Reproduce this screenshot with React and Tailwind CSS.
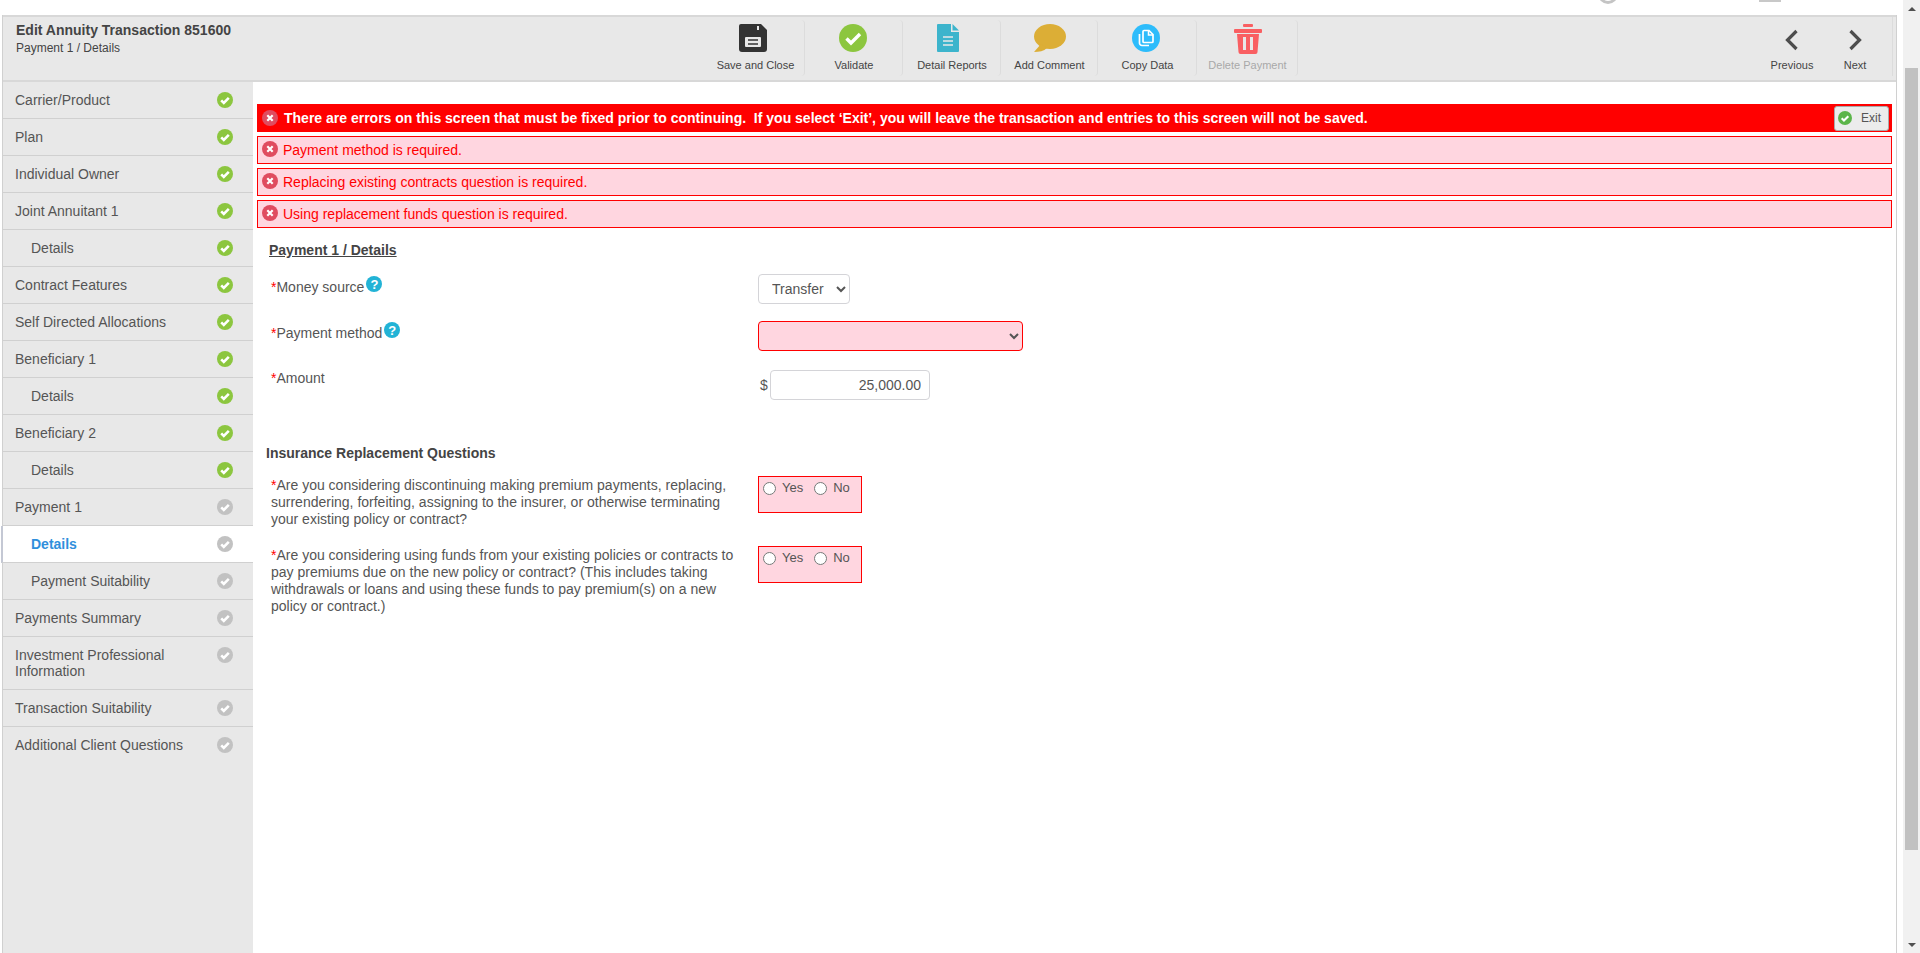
import React from "react";

const NAV = [
  { label: "Carrier/Product", done: true },
  { label: "Plan", done: true },
  { label: "Individual Owner", done: true },
  { label: "Joint Annuitant 1", done: true },
  { label: "Details", done: true, sub: true },
  { label: "Contract Features", done: true },
  { label: "Self Directed Allocations", done: true },
  { label: "Beneficiary 1", done: true },
  { label: "Details", done: true, sub: true },
  { label: "Beneficiary 2", done: true },
  { label: "Details", done: true, sub: true },
  { label: "Payment 1" },
  { label: "Details", sub: true, active: true },
  { label: "Payment Suitability", sub: true },
  { label: "Payments Summary" },
  { label: "Investment Professional Information" },
  { label: "Transaction Suitability" },
  { label: "Additional Client Questions", last: true },
];

const ERRORS = [
  "Payment method is required.",
  "Replacing existing contracts question is required.",
  "Using replacement funds question is required.",
];

function CheckDot({ color = "#8cc63f", size = 16, stroke = 2.6 }) {
  return (
    <svg width={size} height={size} viewBox="0 0 16 16" className="shrink-0">
      <circle cx="8" cy="8" r="8" fill={color} />
      <path d="M4.2 8.3l2.6 2.6 5-5" fill="none" stroke="#fff" strokeWidth={stroke} />
    </svg>
  );
}

function ErrorDot() {
  return (
    <svg width="16" height="16" viewBox="0 0 16 16" className="shrink-0">
      <circle cx="8" cy="8" r="8" fill="#e04c60" />
      <path d="M5.3 5.3l5.4 5.4M10.7 5.3l-5.4 5.4" stroke="#fff" strokeWidth="2.2" />
    </svg>
  );
}

function HelpDot() {
  return (
    <span className="inline-flex items-center justify-center w-[16px] h-[16px] rounded-full bg-[#22b3d6] text-white text-[13px] leading-none font-bold align-top">
      ?
    </span>
  );
}

function SaveIcon() {
  return (
    <svg width="28" height="28" viewBox="0 0 28 28">
      <path d="M2 0h20l6 6v19a3 3 0 0 1-3 3H3a3 3 0 0 1-3-3V2a2 2 0 0 1 2-2z" fill="#333" />
      <rect x="18" y="2" width="2" height="4" fill="#e8e8e8" />
      <rect x="6" y="13" width="16" height="10" rx="1" fill="#e8e8e8" />
      <path d="M9 16h10M9 20h10" stroke="#333" strokeWidth="1.6" />
    </svg>
  );
}

function ValidateIcon() {
  return (
    <svg width="28" height="28" viewBox="0 0 28 28">
      <circle cx="14" cy="14" r="14" fill="#8cc63f" />
      <path d="M7.5 14.5l4.5 4.5 9-9" fill="none" stroke="#fff" strokeWidth="3.4" />
    </svg>
  );
}

function ReportIcon() {
  return (
    <svg width="22" height="28" viewBox="0 0 22 28">
      <path d="M1 0h13v8h8v19a1 1 0 0 1-1 1H1a1 1 0 0 1-1-1V1a1 1 0 0 1 1-1z" fill="#3cb4cc" />
      <path d="M15.5 0L22 6.500h-6.500z" fill="#3cb4cc" />
      <path d="M6 13h10M6 17h10M6 21h10" stroke="#e8e8e8" strokeWidth="1.6" />
    </svg>
  );
}

function CommentIcon() {
  return (
    <svg width="32" height="28" viewBox="0 0 32 28">
      <ellipse cx="16" cy="12.500" rx="16" ry="12.500" fill="#dcae36" />
      <path d="M7 20L0 28c5 0 10-1 13-4z" fill="#dcae36" />
    </svg>
  );
}

function CopyIcon() {
  return (
    <svg width="28" height="28" viewBox="0 0 28 28">
      <circle cx="14" cy="14" r="14" fill="#2dbcfb" />
      <path d="M12 6.500h5l4 4v7a1 1 0 0 1-1 1h-8a1 1 0 0 1-1-1v-10a1 1 0 0 1 1-1z" fill="none" stroke="#fff" strokeWidth="1.700" />
      <path d="M16.500 6.500v4.500h4.500" fill="none" stroke="#fff" strokeWidth="1.500" />
      <path d="M7.500 10v9a2.500 2.500 0 0 0 2.500 2.500h7" fill="none" stroke="#fff" strokeWidth="1.700" />
    </svg>
  );
}

function TrashIcon() {
  return (
    <svg width="28" height="30" viewBox="0 0 28 30">
      <rect x="9" y="0" width="10" height="3" rx="1" fill="#f95f62" />
      <rect x="0" y="5" width="28" height="4" rx="1" fill="#f95f62" />
      <path d="M3 10h22l-1.500 18a2 2 0 0 1-2 2h-15a2 2 0 0 1-2-2z" fill="#f95f62" />
      <rect x="9" y="13" width="3" height="13" fill="#e8e8e8" />
      <rect x="16" y="13" width="3" height="13" fill="#e8e8e8" />
    </svg>
  );
}

function Chevron({ left }) {
  return (
    <svg width="16" height="24" viewBox="0 0 16 24">
      <path d={left ? "M12.500 3L3.500 12l9 9" : "M3.500 3l9 9-9 9"} fill="none" stroke="#4d4d4d" strokeWidth="3.200" />
    </svg>
  );
}

function ToolButton({ icon, label, muted, width, shift = "" }) {
  return (
    <div className={`flex flex-col items-center h-[56px] pl-[1px] border-r border-[#dcdcdc] rounded-r-sm ${width}`}>
      <div className={`h-[34px] pt-[4px] flex items-start justify-center ${shift}`}>{icon}</div>
      <span className={`mt-[5px] text-[11px] leading-[13px] whitespace-nowrap ${muted ? "text-[#a8a8a8]" : "text-[#444]"}`}>{label}</span>
    </div>
  );
}

function NavRow({ item }) {
  const rowBg = item.active ? "bg-white -ml-[2px] pl-[12px] border-l-2 border-l-[#c4c8d4]" : "pl-[12px]";
  const textCls = item.active ? "text-[#2f8fdc] font-bold pl-[16px]" : item.sub ? "text-[#555] pl-[16px]" : "text-[#555]";
  return (
    <div className={`flex items-start justify-between pr-[20px] pt-[10px] pb-[10px] ${item.last ? "" : "border-b border-[#d0d0d0]"} ${rowBg}`}>
      <span className={`text-[14px] leading-[16px] w-[170px] ${textCls}`}>{item.label}</span>
      <CheckDot color={item.done ? "#8cc63f" : "#c2c2c2"} />
    </div>
  );
}

function YesNo() {
  return (
    <div className="w-[104px] h-[37px] border border-[#ff0000] bg-[#ffd6e0] flex items-start gap-[8px] pl-[4px] pt-[3px] text-[13px] text-[#555]">
      <label className="flex items-center gap-[6px] leading-[16px]">
        <input type="radio" className="w-[13px] h-[13px] m-0" /> Yes
      </label>
      <label className="flex items-center gap-[6px] leading-[16px] ml-[3px]">
        <input type="radio" className="w-[13px] h-[13px] m-0" /> No
      </label>
    </div>
  );
}

export default function App() {
  return (
    <div className="h-[953px] w-[1920px] overflow-hidden flex bg-white font-['Liberation_Sans',Arial,sans-serif] text-[14px] text-[#555]">
      <div className="w-[1903px] flex flex-col">
        {/* cut off top bar */}
        <div className="h-[15px] shrink-0 overflow-hidden flex items-start">
          <div className="ml-[1598px] -mt-[16px] w-[20px] h-[20px] rounded-full border-[3px] border-[#c4c4c4]" />
          <div className="ml-[141px] w-[22px] h-[2px] bg-[#c8c8c8]" />
        </div>

        <div className="flex-1 min-h-0 ml-[2px] mr-[6px] flex flex-col border-l border-r border-[#d0d0d0]">
          {/* Header */}
          <div className="h-[67px] shrink-0 bg-[#e8e8e8] border-t-2 border-b-2 border-[#d8d8d8] flex items-start">
            <div className="w-[703px] pl-[13px] pt-[4px]">
              <div className="text-[14px] leading-[18px] font-bold text-[#444]">Edit Annuity Transaction 851600</div>
              <div className="text-[12px] leading-[18px] text-[#444]">Payment 1 / Details</div>
            </div>
            <div className="flex pt-[3px]">
              <ToolButton width="w-[99px]" shift="-ml-[5px]" icon={<SaveIcon />} label="Save and Close" />
              <ToolButton width="w-[98px]" shift="-ml-[3px]" icon={<ValidateIcon />} label="Validate" />
              <ToolButton width="w-[98px]" shift="-ml-[9px]" icon={<ReportIcon />} label="Detail Reports" />
              <ToolButton width="w-[97px]" shift="ml-[1px]" icon={<CommentIcon />} label="Add Comment" />
              <ToolButton width="w-[99px]" shift="-ml-[3px]" icon={<CopyIcon />} label="Copy Data" />
              <ToolButton width="w-[101px]" shift="ml-[1px]" icon={<TrashIcon />} label="Delete Payment" muted />
            </div>
            <div className="ml-auto mr-[3px] flex pt-[3px] h-[59px] border-r border-[#dcdcdc]">
              <div className="w-[52px] flex flex-col items-center">
                <div className="h-[34px] pt-[8px]"><Chevron left /></div>
                <span className="mt-[5px] text-[11px] leading-[13px] text-[#444]">Previous</span>
              </div>
              <div className="w-[74px] flex flex-col items-center">
                <div className="h-[34px] pt-[8px]"><Chevron /></div>
                <span className="mt-[5px] text-[11px] leading-[13px] text-[#444]">Next</span>
              </div>
            </div>
          </div>

          <div className="flex-1 min-h-0 flex">
            {/* Sidebar */}
            <aside className="w-[250px] shrink-0 bg-[#e8e8e8]">
              {NAV.map((item, i) => (
                <NavRow key={i} item={item} />
              ))}
            </aside>

            {/* Main */}
            <main className="flex-1 min-w-0 pt-[22px] pl-[4px] pr-[4px]">
              <div className="h-[28px] bg-[#ff0000] flex items-center pl-[5px] pr-[3px] text-white font-bold">
                <ErrorDot />
                <span className="ml-[6px] whitespace-pre">There are errors on this screen that must be fixed prior to continuing.  If you select ‘Exit’, you will leave the transaction and entries to this screen will not be saved.</span>
                <button className="ml-auto w-[55px] h-[25px] bg-[#ececec] border border-[#aaa] rounded-[3px] flex items-center pl-[3px] gap-[9px] text-[12px] font-normal text-[#555]">
                  <CheckDot color="#5cb54a" size={14} stroke={2.4} />
                  Exit
                </button>
              </div>

              <div className="mt-[4px] flex flex-col gap-[4px]">
                {ERRORS.map((msg) => (
                  <div key={msg} className="h-[28px] border border-[#ff0000] bg-[#ffd6e0] flex items-center pl-[4px] text-[#ff0000]">
                    <span className="-mt-[2px]"><ErrorDot /></span>
                    <span className="ml-[5px]">{msg}</span>
                  </div>
                ))}
              </div>

              <h2 className="mt-[14px] ml-[12px] text-[14px] leading-[16px] font-bold underline text-[#444]">Payment 1 / Details</h2>

              <div className="mt-[16px] ml-[14px] flex flex-col">
                <div className="flex items-start h-[47px]">
                  <div className="w-[487px] pt-[5px] leading-[16px] flex items-start">
                    <span className="text-[#ff0000]">*</span>Money source
                    <span className="ml-[2px] -mt-[3px]"><HelpDot /></span>
                  </div>
                  <select className="w-[92px] h-[30px] border border-[#d4d4d8] rounded-[4px] bg-white pl-[9px] text-[14px] text-[#555]">
                    <option>Transfer</option>
                  </select>
                </div>
                <div className="flex items-start h-[49px]">
                  <div className="w-[487px] pt-[4px] leading-[16px] flex items-start">
                    <span className="text-[#ff0000]">*</span>Payment method
                    <span className="ml-[2px] -mt-[3px]"><HelpDot /></span>
                  </div>
                  <select className="w-[265px] h-[30px] border border-[#ff0000] rounded-[4px] bg-[#ffd6e0] text-[14px]">
                    <option></option>
                  </select>
                </div>
                <div className="flex items-start">
                  <div className="w-[487px] leading-[16px]">
                    <span className="text-[#ff0000]">*</span>Amount
                  </div>
                  <span className="pt-[7px] pl-[2px] w-[12px] leading-[16px]">$</span>
                  <input readOnly value="25,000.00" className="w-[160px] h-[30px] border border-[#d4d4d8] rounded-[4px] text-right pr-[8px] text-[14px] text-[#555]" />
                </div>
              </div>

              <h3 className="mt-[45px] ml-[9px] text-[14px] leading-[16px] font-bold text-[#444]">Insurance Replacement Questions</h3>

              <div className="mt-[15px] ml-[14px] flex items-start h-[70px]">
                <p className="w-[487px] leading-[17px] pr-[14px] pt-[1px]">
                  <span className="text-[#ff0000]">*</span>Are you considering discontinuing making premium payments, replacing, surrendering, forfeiting, assigning to the insurer, or otherwise terminating your existing policy or contract?
                </p>
                <YesNo />
              </div>
              <div className="ml-[14px] flex items-start">
                <p className="w-[487px] leading-[17px] pr-[14px] pt-[1px]">
                  <span className="text-[#ff0000]">*</span>Are you considering using funds from your existing policies or contracts to pay premiums due on the new policy or contract? (This includes taking withdrawals or loans and using these funds to pay premium(s) on a new policy or contract.)
                </p>
                <YesNo />
              </div>
            </main>
          </div>
        </div>
      </div>

      {/* Scrollbar */}
      <div className="w-[17px] bg-[#f1f1f1] flex flex-col items-center">
        <div className="h-[17px] shrink-0 flex items-center justify-center">
          <div className="w-0 h-0 border-x-[4px] border-x-transparent border-b-[4px] border-b-[#505050]" />
        </div>
        <div className="mt-[51px] w-[13px] h-[782px] bg-[#c1c1c1]" />
        <div className="mt-auto h-[17px] shrink-0 flex items-center justify-center">
          <div className="w-0 h-0 border-x-[4px] border-x-transparent border-t-[4px] border-t-[#505050]" />
        </div>
      </div>
    </div>
  );
}
